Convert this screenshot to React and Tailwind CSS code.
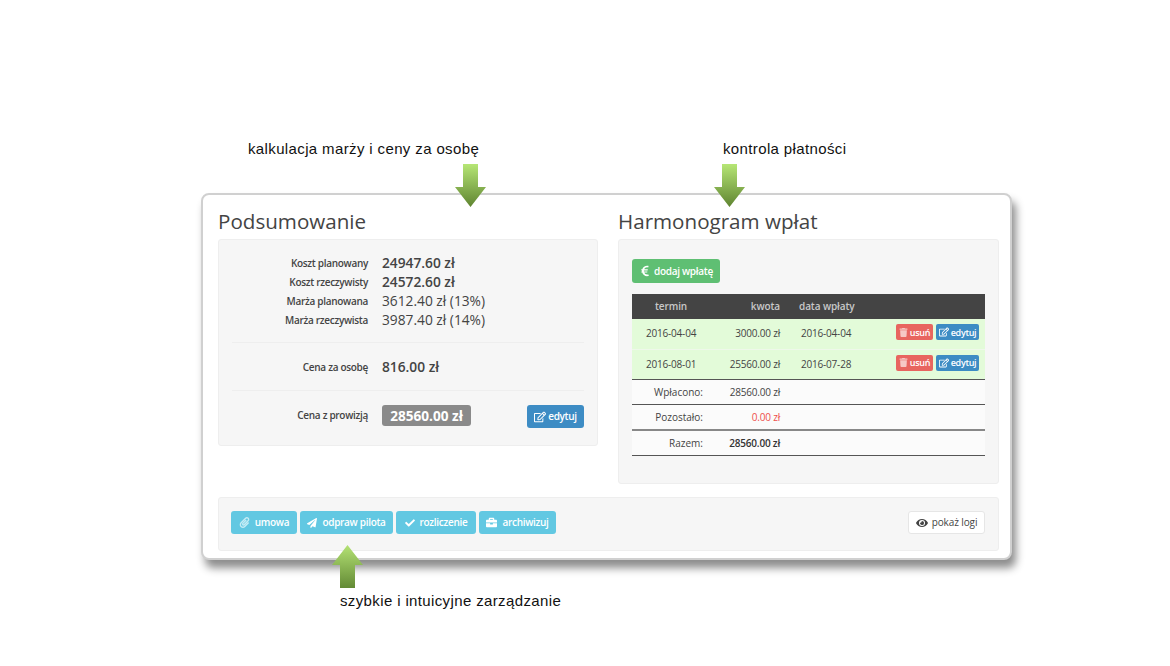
import { FaBriefcase, FaCheck, FaEuroSign, FaEye, FaPaperclip, FaPaperPlane, FaRegEdit, FaTrash } from "react-icons/fa"

// strzalka zielona nad / pod karta
function Arrow({ up, id, className }) {
  return (
    <svg viewBox="0 0 31 43" width="31" height="43" className={className}>
      <defs>
        <linearGradient id={id} x1="0" y1="0" x2="0" y2="1">
          <stop offset="0" stopColor={up ? "#b4e274" : "#b6e675"} />
          <stop offset="1" stopColor={up ? "#638a35" : "#5f8431"} />
        </linearGradient>
      </defs>
      <path d={up ? "M15.5 0L31 20H23V43H8V20H0Z" : "M8 0H23V23H31L15.5 43L0 23H8Z"} fill={`url(#${id})`} />
    </svg>
  )
}

function SummaryRow({ label, value, valueClass }) {
  return (
    <div className="flex items-center h-[19px]">
      <div className="w-[149px] text-right text-[10px] tracking-[-0.3px] font-semibold text-[#444]">{label}</div>
      <div className={`ml-[14px] text-[#444] ${valueClass}`}>{value}</div>
    </div>
  )
}

function InfoButton({ icon, label, className }) {
  return (
    <button className={`h-[23px] flex items-center justify-center gap-[5px] rounded-[3px] bg-[#62c8e2] text-white text-[10px] tracking-[-0.3px] font-semibold ${className}`}>
      {icon}
      {label}
    </button>
  )
}

function SmallButtons() {
  return (
    <div className="flex justify-end gap-[3px] pr-[6px] pb-[3px]">
      <button className="w-[37px] h-[16px] flex items-center justify-center gap-[2px] rounded-[2px] bg-[#e8655f] text-white text-[9px] tracking-[-0.3px] font-semibold">
        <FaTrash className="text-[9px] text-[#f6c8c5]" />
        usuń
      </button>
      <button className="w-[43px] h-[16px] flex items-center justify-center gap-[2px] rounded-[2px] bg-[#3d8cc4] text-white text-[9px] tracking-[-0.3px] font-semibold">
        <FaRegEdit className="text-[10px]" />
        edytuj
      </button>
    </div>
  )
}

const payments = [
  { termin: "2016-04-04", kwota: "3000.00 zł", data: "2016-04-04" },
  { termin: "2016-08-01", kwota: "25560.00 zł", data: "2016-07-28" },
]

const totals = [
  { label: "Wpłacono:", value: "28560.00 zł", cls: "text-[#444]", row: "h-[25px] border-b border-[#555555]" },
  { label: "Pozostało:", value: "0.00 zł", cls: "text-[#ee4f4b]", row: "h-[26px] border-b-2 border-[#888888]" },
  { label: "Razem:", value: "28560.00 zł", cls: "text-[#333] font-semibold", row: "h-[25px] border-b border-[#555555]" },
]

export default function App() {
  return (
    <div className="relative w-[1170px] h-[666px] bg-white pt-[193px] pl-[201px] overflow-hidden font-['Open_Sans',sans-serif]">
      {/* Karta */}
      <div className="w-[811px] h-[367px] bg-white border-2 border-[#d0d0d0] rounded-[8px] shadow-[4px_8px_8px_rgba(0,0,0,0.45)] pl-[15px] pr-[11px]">
        <div className="flex gap-[20px]">
          {/* Podsumowanie */}
          <div className="w-[380px]">
            <h2 className="h-[44px] pt-[11px] text-[20.6px] leading-[30px] text-[#444]">Podsumowanie</h2>
            <div className="h-[207px] bg-[#f6f6f6] border border-[#eeeeee] rounded-[3px] pt-[14px]">
              <SummaryRow label="Koszt planowany" value="24947.60 zł" valueClass="text-[13.75px] font-semibold" />
              <SummaryRow label="Koszt rzeczywisty" value="24572.60 zł" valueClass="text-[13.75px] font-semibold" />
              <SummaryRow label="Marża planowana" value="3612.40 zł (13%)" valueClass="text-[13.75px]" />
              <SummaryRow label="Marża rzeczywista" value="3987.40 zł (14%)" valueClass="text-[13.75px]" />
              <div className="mx-[13px] mt-[12px] border-t border-[#eeeeee]" />
              <div className="mt-[15px]">
                <SummaryRow label="Cena za osobę" value="816.00 zł" valueClass="text-[13.75px] font-semibold" />
              </div>
              <div className="mx-[13px] mt-[13px] border-t border-[#eeeeee]" />
              <div className="flex items-start mt-[14px]">
                <div className="w-[149px] text-right text-[10px] tracking-[-0.3px] leading-[21px] font-semibold text-[#444]">Cena z prowizją</div>
                <div className="ml-[14px] w-[89px] h-[21px] leading-[21px] text-center bg-[#8a8a8a] rounded-[3px] text-white text-[13.6px] font-bold">28560.00 zł</div>
                <button className="ml-[56px] w-[57px] h-[23px] flex items-center justify-center gap-[2px] rounded-[3px] bg-[#3d8cc4] text-white text-[10px] tracking-[-0.3px] font-semibold">
                  <FaRegEdit className="text-[12px]" />
                  edytuj
                </button>
              </div>
            </div>
          </div>

          {/* Harmonogram */}
          <div className="w-[381px]">
            <h2 className="h-[44px] pt-[11px] text-[20.6px] leading-[30px] text-[#444]">Harmonogram wpłat</h2>
            <div className="h-[245px] bg-[#f6f6f6] border border-[#eeeeee] rounded-[3px] pt-[19px] pl-[13px] pr-[13px]">
              <button className="w-[88px] h-[24px] flex items-center justify-center gap-[3px] rounded-[3px] bg-[#5fbf73] text-white text-[10px] tracking-[-0.3px] font-semibold">
                <FaEuroSign className="text-[12px]" />
                dodaj wpłatę
              </button>
              <table className="mt-[11px] w-[353px] table-fixed border-collapse text-[10px]">
                <colgroup>
                  <col className="w-[82px]" />
                  <col className="w-[66px]" />
                  <col className="w-[85px]" />
                  <col />
                </colgroup>
                <thead>
                  <tr className="h-[25px] bg-[#444444] text-[#c9c9c9] tracking-[-0.1px]">
                    <th className="pl-[23px] text-left font-semibold">termin</th>
                    <th className="text-right font-semibold">kwota</th>
                    <th className="pl-[19px] text-left font-semibold">data wpłaty</th>
                    <th />
                  </tr>
                </thead>
                <tbody>
                  {payments.map((p, i) => (
                    <tr key={p.termin} className={`h-[30px] bg-[#e3fbd9] text-[#444] ${i === 0 ? "border-b border-[#eef8ea]" : "border-b border-[#555555]"}`}>
                      <td className="pl-[14px] tracking-[-0.2px]">{p.termin}</td>
                      <td className="text-right tracking-[-0.2px]">{p.kwota}</td>
                      <td className="pl-[21px] tracking-[-0.2px]">{p.data}</td>
                      <td><SmallButtons /></td>
                    </tr>
                  ))}
                  {totals.map((t) => (
                    <tr key={t.label} className={`${t.row} bg-[#fbfbfb] text-[#444]`}>
                      <td className="pr-[11px] pt-px text-right">{t.label}</td>
                      <td className={`pt-px text-right tracking-[-0.2px] ${t.cls}`}>{t.value}</td>
                      <td colSpan={2} />
                    </tr>
                  ))}
                </tbody>
              </table>
            </div>
          </div>
        </div>

        {/* Akcje */}
        <div className="mt-[13px] h-[54px] bg-[#f6f6f6] border border-[#eeeeee] rounded-[3px] flex items-start justify-between pt-[13px] pl-[12px] pr-[13px]">
          <div className="flex gap-[3px]">
            <InfoButton icon={<FaPaperclip className="text-[11px] text-[#c5ecf5]" />} label="umowa" className="w-[66px]" />
            <InfoButton icon={<FaPaperPlane className="text-[10px]" />} label="odpraw pilota" className="w-[93px]" />
            <InfoButton icon={<FaCheck className="text-[10px]" />} label="rozliczenie" className="w-[80px]" />
            <InfoButton icon={<FaBriefcase className="text-[11px]" />} label="archiwizuj" className="w-[77px]" />
          </div>
          <button className="w-[77px] h-[23px] flex items-center justify-center gap-[4px] rounded-[3px] bg-white border border-[#e6e6e6] text-[#444] text-[10px] tracking-[-0.1px]">
            <FaEye className="text-[12px]" />
            pokaż logi
          </button>
        </div>
      </div>

      {/* Opisy i strzalki */}
      <div className="absolute left-[248px] top-[140px] text-[15px] tracking-[0.37px] leading-[18px] text-[#111] font-['Liberation_Sans',sans-serif]">kalkulacja marży i ceny za osobę</div>
      <Arrow id="arrow-a" className="absolute left-[455px] top-[164px]" />
      <div className="absolute left-[723px] top-[140px] text-[15px] tracking-[0.37px] leading-[18px] text-[#111] font-['Liberation_Sans',sans-serif]">kontrola płatności</div>
      <Arrow id="arrow-b" className="absolute left-[714px] top-[164px]" />
      <Arrow up id="arrow-c" className="absolute left-[332px] top-[545px]" />
      <div className="absolute left-[340px] top-[592px] text-[15px] tracking-[0.37px] leading-[18px] text-[#111] font-['Liberation_Sans',sans-serif]">szybkie i intuicyjne zarządzanie</div>
    </div>
  )
}
